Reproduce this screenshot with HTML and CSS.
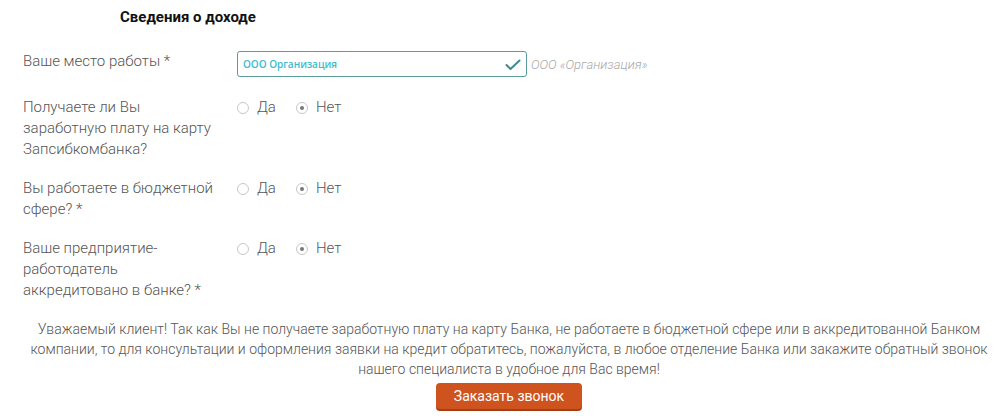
FILE: index.html
```html
<!DOCTYPE html>
<html lang="ru">
<head>
<meta charset="utf-8">
<link rel="stylesheet" href="styles.css">
</head>
<body>
<div class="page">
  <h2 class="title">Сведения о доходе</h2>
  <div class="form">
    <div class="row first">
      <div class="label">Ваше место работы *</div>
      <div class="field">
        <div class="input">
          <span class="input-text">ООО Организация</span>
          <svg class="check" width="16" height="12" viewBox="0 0 16 12"><polyline points="1.5,6 5.5,10 14.5,1.5" fill="none" stroke="#3d8d8e" stroke-width="2" stroke-linecap="round" stroke-linejoin="round"/></svg>
        </div>
        <span class="hint">ООО «Организация»</span>
      </div>
    </div>
    <div class="row">
      <div class="label">Получаете ли Вы заработную плату на карту Запсибкомбанка?</div>
      <div class="radios">
        <label class="radio"><span class="dot"></span>Да</label>
        <label class="radio"><span class="dot on"></span>Нет</label>
      </div>
    </div>
    <div class="row">
      <div class="label">Вы работаете в бюджетной сфере? *</div>
      <div class="radios">
        <label class="radio"><span class="dot"></span>Да</label>
        <label class="radio"><span class="dot on"></span>Нет</label>
      </div>
    </div>
    <div class="row">
      <div class="label">Ваше предприятие-работодатель аккредитовано в банке? *</div>
      <div class="radios">
        <label class="radio"><span class="dot"></span>Да</label>
        <label class="radio"><span class="dot on"></span>Нет</label>
      </div>
    </div>
  </div>
  <p class="notice">Уважаемый клиент! Так как Вы не получаете заработную плату на карту Банка, не работаете в бюджетной сфере или в аккредитованной Банком компании, то для консультации и оформления заявки на кредит обратитесь, пожалуйста, в любое отделение Банка или закажите обратный звонок нашего специалиста в удобное для Вас время!</p>
  <div class="actions"><button class="btn">Заказать звонок</button></div>
</div>
</body>
</html>
```
FILE: styles.css
```css
html, body {
  margin: 0;
  padding: 0;
  background: #fff;
}
body {
  font-family: Roboto, "Liberation Sans", sans-serif;
  color: #555;
}
.page {
  width: 1000px;
  height: 416px;
  overflow: hidden;
  box-sizing: border-box;
  padding-top: 7px;
}
.title {
  margin: 0 0 24px 120px;
  font-size: 15px;
  line-height: 20px;
  font-weight: 700;
  color: #111;
}
.form {
  display: flex;
  flex-direction: column;
  gap: 18px;
  padding-left: 23px;
}
.row {
  display: flex;
  align-items: flex-start;
}
.row.first {
  margin-bottom: 2px;
}
.label {
  width: 192px;
  margin-right: 22px;
  font-size: 15px;
  line-height: 21px;
  font-weight: 300;
  color: #555;
}
.field {
  display: flex;
  align-items: center;
  gap: 4px;
}
.input {
  width: 290px;
  height: 26px;
  box-sizing: border-box;
  border: 1px solid #5b9c9e;
  border-radius: 3px;
  display: flex;
  align-items: center;
  justify-content: space-between;
  padding: 0 5px 0 5px;
}
.input-text {
  font-family: "Open Sans", sans-serif;
  font-size: 10px;
  font-weight: 600;
  color: #3bbccf;
}
.check {
  display: block;
  margin-top: 1px;
}
.hint {
  font-size: 13px;
  font-style: italic;
  font-weight: 300;
  color: #a8a8a8;
}
.radios {
  display: flex;
  gap: 20px;
}
.radio {
  display: flex;
  align-items: center;
  gap: 8px;
  font-size: 15px;
  line-height: 21px;
  font-weight: 300;
  color: #555;
}
.dot {
  width: 12px;
  height: 12px;
  box-sizing: border-box;
  border: 1px solid #c8c8c8;
  border-radius: 50%;
  display: flex;
  align-items: center;
  justify-content: center;
}
.dot.on::after {
  content: "";
  width: 4px;
  height: 4px;
  border-radius: 50%;
  background: #777;
}
.notice {
  margin: 18px 0 4px 0;
  padding: 0 6px 0 24px;
  text-align: center;
  font-size: 14px;
  line-height: 20px;
  font-weight: 300;
  color: #555;
}
.actions {
  display: flex;
  justify-content: center;
  padding-left: 18px;
}
.btn {
  width: 146px;
  height: 26px;
  border: none;
  border-radius: 4px;
  background: #cf531e;
  box-shadow: 0 2px 0 #a53e12;
  color: #fff;
  font-family: Roboto, "Liberation Sans", sans-serif;
  font-size: 14px;
  font-weight: 400;
  padding: 0;
}
```
